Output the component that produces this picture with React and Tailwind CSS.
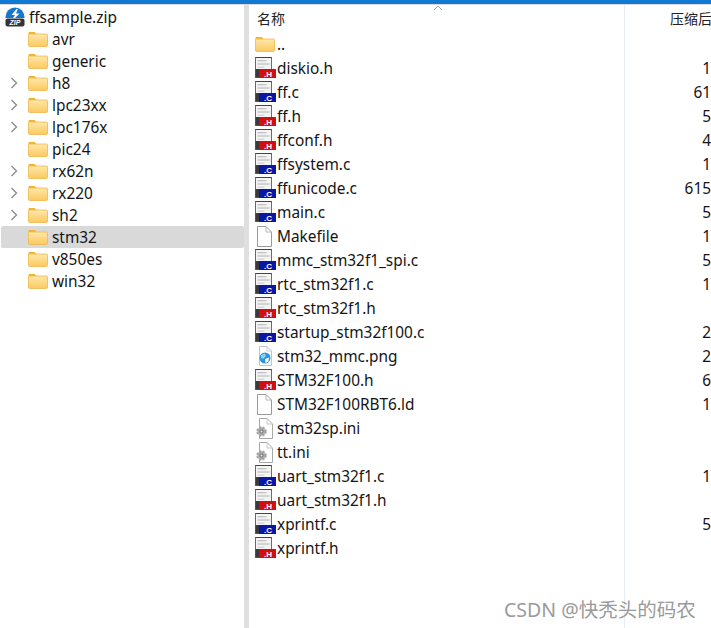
const font = { fontFamily: '"Noto Sans", "Noto Sans CJK SC", sans-serif' };

function Folder({ className = "" }) {
  return (
    <svg width="20" height="16" viewBox="0 0 20 16" className={className}>
      <defs>
        <linearGradient id="folderBody" x1="0" y1="0" x2="0" y2="1">
          <stop offset="0" stopColor="#ffe8ab" />
          <stop offset="1" stopColor="#fbc95f" />
        </linearGradient>
      </defs>
      <path d="M0.5 4V2C0.5 1.4 1 1 1.6 1H6.6L9 3.4V4Z" fill="#f4b32a" />
      <path d="M0.5 14.4V3.6C0.5 3.3 0.8 3 1.1 3H18.6C19.1 3 19.5 3.4 19.5 3.9V14.4C19.5 15 19 15.5 18.4 15.5H1.6C1 15.5 0.5 15 0.5 14.4Z" fill="url(#folderBody)" stroke="#efb84a" strokeWidth="0.8" />
    </svg>
  );
}

function Chevron() {
  return (
    <svg width="8" height="12" viewBox="0 0 8 12" fill="none">
      <path d="M1.5 1L6.5 6L1.5 11" stroke="#8c8c8c" strokeWidth="1.4" />
    </svg>
  );
}

function CodeIcon({ kind }) {
  const band = kind === "h" ? "#d30e0e" : "#0a16a6";
  return (
    <svg width="21" height="22" viewBox="0 0 21 22">
      <rect x="0.5" y="0.5" width="16" height="20" fill="#f4f4f4" stroke="#6a6a6a" />
      <path d="M0.5 0.5H16.5" stroke="#444" />
      <rect x="2.5" y="3" width="9" height="1.5" fill="#c6c6c6" />
      <rect x="2.5" y="6" width="12" height="2" fill="#d2d2d2" />
      <rect x="2.5" y="9.5" width="7" height="1.5" fill="#d8d8d8" />
      <rect x="0.5" y="12" width="4" height="8.5" fill="#3a3a3a" />
      <rect x="4" y="12" width="17" height="9" fill={band} />
      <text x="13" y="19.6" fontSize="8" fontWeight="700" fill="#fff" textAnchor="middle" fontFamily="Liberation Sans, sans-serif">.{kind === "h" ? "H" : "C"}</text>
    </svg>
  );
}

function BlankIcon() {
  return (
    <svg width="18" height="21" viewBox="0 0 18 21" fill="none">
      <path d="M2.5 0.5H11L16.5 6V20.5H2.5Z" fill="#fff" stroke="#9a9a9a" />
      <path d="M11 0.5V6H16.5" stroke="#b8b8b8" />
    </svg>
  );
}

function PngIcon() {
  return (
    <svg width="18" height="21" viewBox="0 0 18 21" fill="none">
      <path d="M4.5 0.5H12L16.5 5V19.5H4.5Z" fill="#fff" stroke="#c2c2c2" />
      <path d="M12 0.5V5H16.5" stroke="#cfcfcf" />
      <circle cx="10" cy="12" r="5.5" fill="#2f93d8" />
      <path d="M6 9L10 7.5L11 10L8 13L6 12Z" fill="#8fd0ef" />
      <path d="M10 13L14 11.5L13.5 15.5L10.5 17Z" fill="#eef8fc" />
    </svg>
  );
}

function IniIcon() {
  return (
    <svg width="18" height="21" viewBox="0 0 18 21" fill="none">
      <path d="M4.5 0.5H12L17.5 6V20.5H4.5Z" fill="#fff" stroke="#a8a8a8" />
      <path d="M12 0.5V6H17.5" stroke="#c8c8c8" />
      <circle cx="6.5" cy="13.5" r="4.2" fill="#b4b4b4" stroke="#a2a2a2" strokeWidth="2" strokeDasharray="2 1.4" />
      <circle cx="6.5" cy="13.5" r="2.2" fill="#7f7f7f" />
      <circle cx="6.5" cy="13.5" r="1" fill="#e4e4e4" />
    </svg>
  );
}

function ZipIcon() {
  return (
    <svg width="20" height="20" viewBox="0 0 20 20">
      <path d="M0.5 11V10A9.5 9.5 0 0 1 19.5 10V11Z" fill="#1577cf" />
      <path d="M11.5 2L6.5 8H10L8 11H10L14.5 6.5H11L12.8 2Z" fill="#fff" />
      <rect x="0.5" y="11.5" width="19" height="8" rx="2" fill="#30353c" />
      <text x="10" y="18.4" fontSize="7" fontWeight="700" fontStyle="italic" fill="#fff" textAnchor="middle" fontFamily="Liberation Sans, sans-serif">ZIP</text>
    </svg>
  );
}

const tree = [
  ["avr", false],
  ["generic", false],
  ["h8", true],
  ["lpc23xx", true],
  ["lpc176x", true],
  ["pic24", false],
  ["rx62n", true],
  ["rx220", true],
  ["sh2", true],
  ["stm32", false],
  ["v850es", false],
  ["win32", false],
];

const files = [
  ["..", "folder", ""],
  ["diskio.h", "h", "1"],
  ["ff.c", "c", "61"],
  ["ff.h", "h", "5"],
  ["ffconf.h", "h", "4"],
  ["ffsystem.c", "c", "1"],
  ["ffunicode.c", "c", "615"],
  ["main.c", "c", "5"],
  ["Makefile", "blank", "1"],
  ["mmc_stm32f1_spi.c", "c", "5"],
  ["rtc_stm32f1.c", "c", "1"],
  ["rtc_stm32f1.h", "h", ""],
  ["startup_stm32f100.c", "c", "2"],
  ["stm32_mmc.png", "png", "2"],
  ["STM32F100.h", "h", "6"],
  ["STM32F100RBT6.ld", "blank", "1"],
  ["stm32sp.ini", "ini", ""],
  ["tt.ini", "ini", ""],
  ["uart_stm32f1.c", "c", "1"],
  ["uart_stm32f1.h", "h", ""],
  ["xprintf.c", "c", "5"],
  ["xprintf.h", "h", ""],
];

function FileGlyph({ type }) {
  if (type === "folder") return <Folder />;
  if (type === "h" || type === "c") return <CodeIcon kind={type} />;
  if (type === "png") return <PngIcon />;
  if (type === "ini") return <IniIcon />;
  return <BlankIcon />;
}

export default function App() {
  return (
    <div className="relative h-[628px] w-[711px] overflow-hidden bg-white text-[15.4px] text-[#141414]" style={font}>
      <div className="h-[4px] bg-[#1279d2]" />
      <div className="h-[1px] bg-[#d9d9d9]" />
      <div className="flex h-[623px]">
        <div className="w-[244px] shrink-0 pl-[1px] pt-[1px]">
          <div className="flex h-[22px] items-center pl-[4px]">
            <ZipIcon />
            <span className="ml-[4px] pt-[2px] leading-[22px]">ffsample.zip</span>
          </div>
          {tree.map(([name, arrow]) => (
            <div
              key={name}
              className={`flex h-[22px] items-center rounded-[2px] ${name === "stm32" ? "bg-[#d9d9d9]" : ""}`}
            >
              <div className="flex w-[27px] shrink-0 items-center justify-start pl-[9px]">
                {arrow && <Chevron />}
              </div>
              <Folder />
              <span className="ml-[4px] pt-[2px] leading-[22px]">{name}</span>
            </div>
          ))}
        </div>
        <div className="w-[5px] shrink-0 bg-[#dfdfdf]" />
        <div className="flex min-w-0 flex-1">
          <div className="w-[376px] shrink-0 border-r border-[#e6edf3]">
            <div className="flex h-[27px] items-center pl-[8px] text-[14px] text-[#222]">名称</div>
            {files.map(([name, type]) => (
              <div key={name} className="flex h-[24px] items-center">
                <div className="flex w-[28px] shrink-0 justify-start pl-[6px]">
                  <FileGlyph type={type} />
                </div>
                <span className="pt-[2px] leading-[24px]">{name}</span>
              </div>
            ))}
          </div>
          <div className="min-w-0 flex-1 overflow-hidden">
            <div className="flex h-[27px] items-center whitespace-nowrap pl-[45px] text-[14px] text-[#222]">压缩后大小</div>
            {files.map(([name, , size]) => (
              <div key={name} className="flex h-[24px] items-center justify-end pt-[2px] leading-[24px]">
                {size}
              </div>
            ))}
          </div>
        </div>
      </div>
      <svg width="10" height="6" viewBox="0 0 10 6" fill="none" className="absolute left-[433px] top-[5px]">
        <path d="M1 5L5 1L9 5" stroke="#a8a8a8" />
      </svg>
      <div className="absolute left-[504px] top-[599px] whitespace-nowrap text-[19.5px] leading-[22px] text-[#9a9a9a]">CSDN @快秃头的码农</div>
    </div>
  );
}
